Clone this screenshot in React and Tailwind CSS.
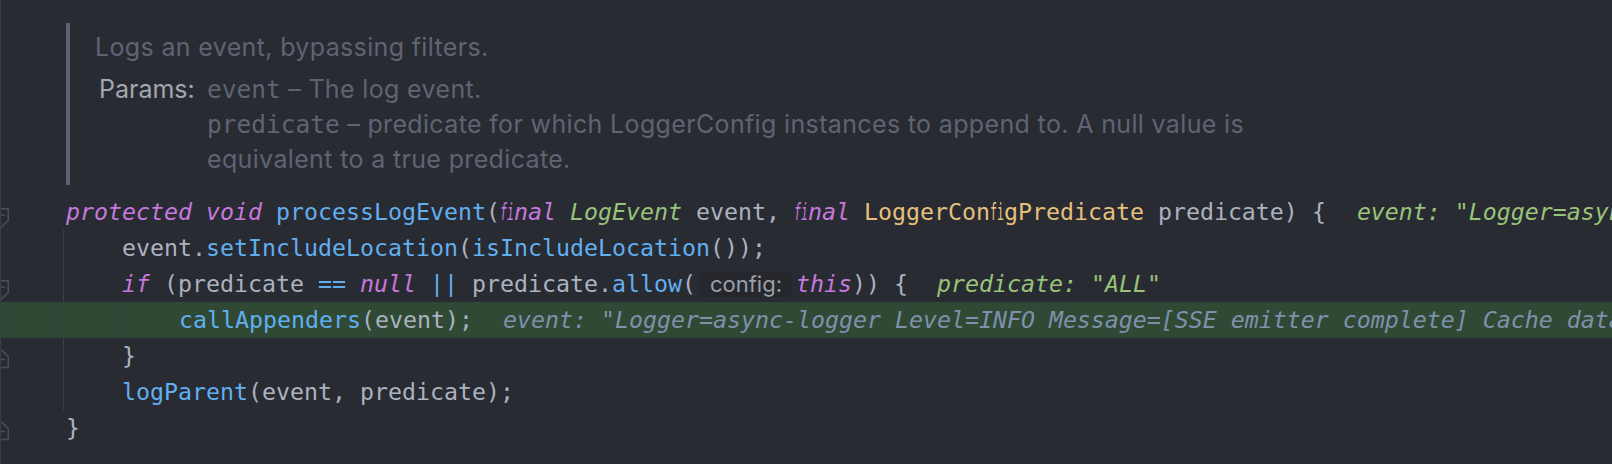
import React from 'react';

// squeezed "fi" ligature: two letters in one monospace cell
const Fi = () => (
  <span className="inline-block w-[14px]">
    <span className="inline-block origin-left scale-x-50">fi</span>
  </span>
);

const FoldStart = () => (
  <svg className="absolute left-0 top-[14px]" width="9" height="21" viewBox="0 0 9 21" fill="none">
    <path d="M0 0.75 H7.25 V12.5 L0 19.5" stroke="#4a4e59" strokeWidth="1.5" />
    <path d="M0 7 H4" stroke="#4a4e59" strokeWidth="1.5" />
  </svg>
);

const FoldEnd = () => (
  <svg className="absolute left-0 top-[11px]" width="9" height="20" viewBox="0 0 9 20" fill="none">
    <path d="M0 0.5 L7.25 7.5 V18.5 H0" stroke="#4a4e59" strokeWidth="1.5" />
    <path d="M0 10.5 H4" stroke="#4a4e59" strokeWidth="1.5" />
  </svg>
);

const Guide = () => <span className="w-px shrink-0 self-stretch bg-[#3b3e48]" />;

const App = () => {
  return (
    <div className="h-[464px] w-[1612px] overflow-hidden border-l border-[#3a3d46] bg-[#292b33]">
      {/* Rendered doc comment */}
      <div className="ml-[65px] mt-[23px] h-[162px] border-l-4 border-[#5d6375] pl-[25px] pt-[7px] font-['Inter',sans-serif] text-[25px] tracking-[0.35px] text-[#5e6472]">
        <div className="flex h-[36px] items-center">Logs an event, bypassing filters.</div>
        <div className="mt-[6px] flex">
          <div className="h-[35px] w-[112px] shrink-0 pl-[4px] leading-[35px] tracking-normal text-[#a3a7b0]">Params:</div>
          <div className="flex flex-col">
            <div className="h-[35px] leading-[35px]">
              <span className="font-['DejaVu_Sans_Mono',monospace] text-[24.5px] tracking-normal">event</span> – The log event.
            </div>
            <div className="h-[35px] leading-[35px]">
              <span className="font-['DejaVu_Sans_Mono',monospace] text-[24.5px] tracking-normal">predicate</span> – predicate for which LoggerConfig instances to append to. A null value is
            </div>
            <div className="h-[35px] leading-[35px]">equivalent to a true predicate.</div>
          </div>
        </div>
      </div>

      {/* Code */}
      <div className="mt-[9px] whitespace-pre font-['DejaVu_Sans_Mono',monospace] text-[23.25px] text-[#abb2bf]">
        <div className="relative flex h-9 items-center">
          <FoldStart />
          <span className="w-[65px] shrink-0" />
          <span>
            <span className="italic text-[#c678dd]">protected</span>{' '}
            <span className="italic text-[#c678dd]">void</span>{' '}
            <span className="text-[#61afef]">processLogEvent</span>(
            <span className="italic text-[#c678dd]"><Fi />nal</span>{' '}
            <span className="italic text-[#98c379]">LogEvent</span> event,{' '}
            <span className="italic text-[#c678dd]"><Fi />nal</span>{' '}
            <span className="text-[#e5c07b]">LoggerCon<Fi />gPredicate</span> predicate) {'{'}
          </span>
          <span className="ml-[31px] italic text-[#98c379]">event: "Logger=async-logger Level=INFO Message=[SSE emitter complete]"</span>
        </div>

        <div className="flex h-9 items-center">
          <span className="w-[62px] shrink-0" />
          <Guide />
          <span className="w-[58px] shrink-0" />
          <span>
            event.<span className="text-[#61afef]">setIncludeLocation</span>(<span className="text-[#61afef]">isIncludeLocation</span>());
          </span>
        </div>

        <div className="relative flex h-9 items-center">
          <FoldStart />
          <span className="w-[62px] shrink-0" />
          <Guide />
          <span className="w-[58px] shrink-0" />
          <span>
            <span className="italic text-[#c678dd]">if</span> (predicate <span className="text-[#61afef]">==</span>{' '}
            <span className="italic text-[#c678dd]">null</span> <span className="text-[#61afef]">||</span> predicate.
            <span className="text-[#61afef]">allow</span>(
          </span>
          <span className="ml-[4px] mr-[4px] inline-flex h-[26px] items-center rounded-[6px] bg-[#25272d] px-[10px] font-['Inter',sans-serif] text-[22px] text-[#9ba0aa]">
            config:
          </span>
          <span>
            <span className="italic text-[#c678dd]">this</span>)) {'{'}
          </span>
          <span className="ml-[29px] italic text-[#98c379]">predicate: "ALL"</span>
        </div>

        <div className="flex h-9 items-center bg-[#2f4935]">
          <span className="w-[62px] shrink-0" />
          <Guide />
          <span className="w-[55px] shrink-0" />
          <Guide />
          <span className="w-[59px] shrink-0" />
          <span>
            <span className="text-[#61afef]">callAppenders</span>(event);
          </span>
          <span className="ml-[30px] italic text-[#7d91ab]">event: "Logger=async-logger Level=INFO Message=[SSE emitter complete] Cache data refreshed"</span>
        </div>

        <div className="relative flex h-9 items-center">
          <FoldEnd />
          <span className="w-[62px] shrink-0" />
          <Guide />
          <span className="w-[58px] shrink-0" />
          <span>{'}'}</span>
        </div>

        <div className="flex h-9 items-center">
          <span className="w-[62px] shrink-0" />
          <Guide />
          <span className="w-[58px] shrink-0" />
          <span>
            <span className="text-[#61afef]">logParent</span>(event, predicate);
          </span>
        </div>

        <div className="relative flex h-9 items-center">
          <FoldEnd />
          <span className="w-[65px] shrink-0" />
          <span>{'}'}</span>
        </div>
      </div>
    </div>
  );
};

export default App;
